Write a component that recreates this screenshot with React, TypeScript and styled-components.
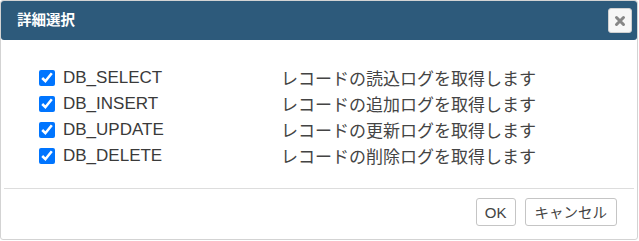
import React from "react";
import styled, { createGlobalStyle } from "styled-components";

const Global = createGlobalStyle`
  html, body { margin: 0; padding: 0; background: #ffffff; }
  body { font-family: "Liberation Sans", "Noto Sans CJK JP", sans-serif; color: #333333; }
  * { box-sizing: border-box; }
`;

const Dialog = styled.div`
  width: 638px;
  height: 240px;
  border: 1px solid #d3d3d3;
  border-radius: 3px;
  background: #ffffff;
  display: flex;
  flex-direction: column;
`;

const Header = styled.div`
  height: 39px;
  background: #2d5a7b;
  border-radius: 3px;
  display: flex;
  align-items: center;
  justify-content: space-between;
  padding: 0 5px 0 16px;
  flex-shrink: 0;
`;

const Title = styled.span`
  color: #ffffff;
  font-family: "Noto Sans CJK JP", sans-serif;
  font-weight: 700;
  font-size: 14.5px;
  line-height: 1;
  margin-top: -2px;
`;

const CloseButton = styled.button`
  width: 24px;
  height: 25px;
  padding: 0;
  margin: 0;
  border: 1px solid #d0d0d0;
  border-radius: 3px;
  background: #f6f6f6;
  display: flex;
  align-items: center;
  justify-content: center;
  cursor: pointer;
`;

const Content = styled.div`
  padding: 25px 0 19px 38px;
  display: grid;
  grid-template-columns: 24px 218px 1fr;
  grid-auto-rows: 26px;
  align-items: center;
  flex: 1;
`;

const Check = styled.input`
  width: 16px;
  height: 16px;
  margin: 0;
  accent-color: #0075ff;
`;

const Label = styled.span`
  font-size: 17px;
  line-height: 26px;
  color: #3a3a3a;
`;

const Desc = styled.span`
  font-family: "Noto Sans CJK JP", sans-serif;
  font-weight: 400;
  font-size: 17px;
  line-height: 26px;
  color: #444444;
`;

const ButtonPane = styled.div`
  margin: 0 3px;
  border-top: 1px solid #dddddd;
  padding: 9px 17px 13px 0;
  display: flex;
  justify-content: flex-end;
  gap: 9px;
`;

const Btn = styled.button<{ $jp?: boolean }>`
  height: 28px;
  padding: 0 ${(p) => (p.$jp ? 9 : 8)}px;
  border: 1px solid #c5c5c5;
  border-radius: 3px;
  background: #ffffff;
  color: #444444;
  font-family: ${(p) => (p.$jp ? '"Noto Sans CJK JP", sans-serif' : '"Liberation Sans", sans-serif')};
  font-size: ${(p) => (p.$jp ? 14.5 : 15)}px;
  line-height: 1;
  cursor: pointer;
`;

const rows = [
  ["DB_SELECT", "レコードの読込ログを取得します"],
  ["DB_INSERT", "レコードの追加ログを取得します"],
  ["DB_UPDATE", "レコードの更新ログを取得します"],
  ["DB_DELETE", "レコードの削除ログを取得します"],
];

export default function App() {
  return (
    <>
      <Global />
      <Dialog>
        <Header>
          <Title>詳細選択</Title>
          <CloseButton aria-label="close">
            <svg width="12" height="12" viewBox="0 0 12 12">
              <path d="M2.5 2.5 L9.5 9.5 M9.5 2.5 L2.5 9.5" stroke="#868686" strokeWidth="3" strokeLinecap="round" />
            </svg>
          </CloseButton>
        </Header>
        <Content>
          {rows.map(([k, d]) => (
            <React.Fragment key={k}>
              <Check type="checkbox" defaultChecked />
              <Label>{k}</Label>
              <Desc>{d}</Desc>
            </React.Fragment>
          ))}
        </Content>
        <ButtonPane>
          <Btn>OK</Btn>
          <Btn $jp>キャンセル</Btn>
        </ButtonPane>
      </Dialog>
    </>
  );
}
